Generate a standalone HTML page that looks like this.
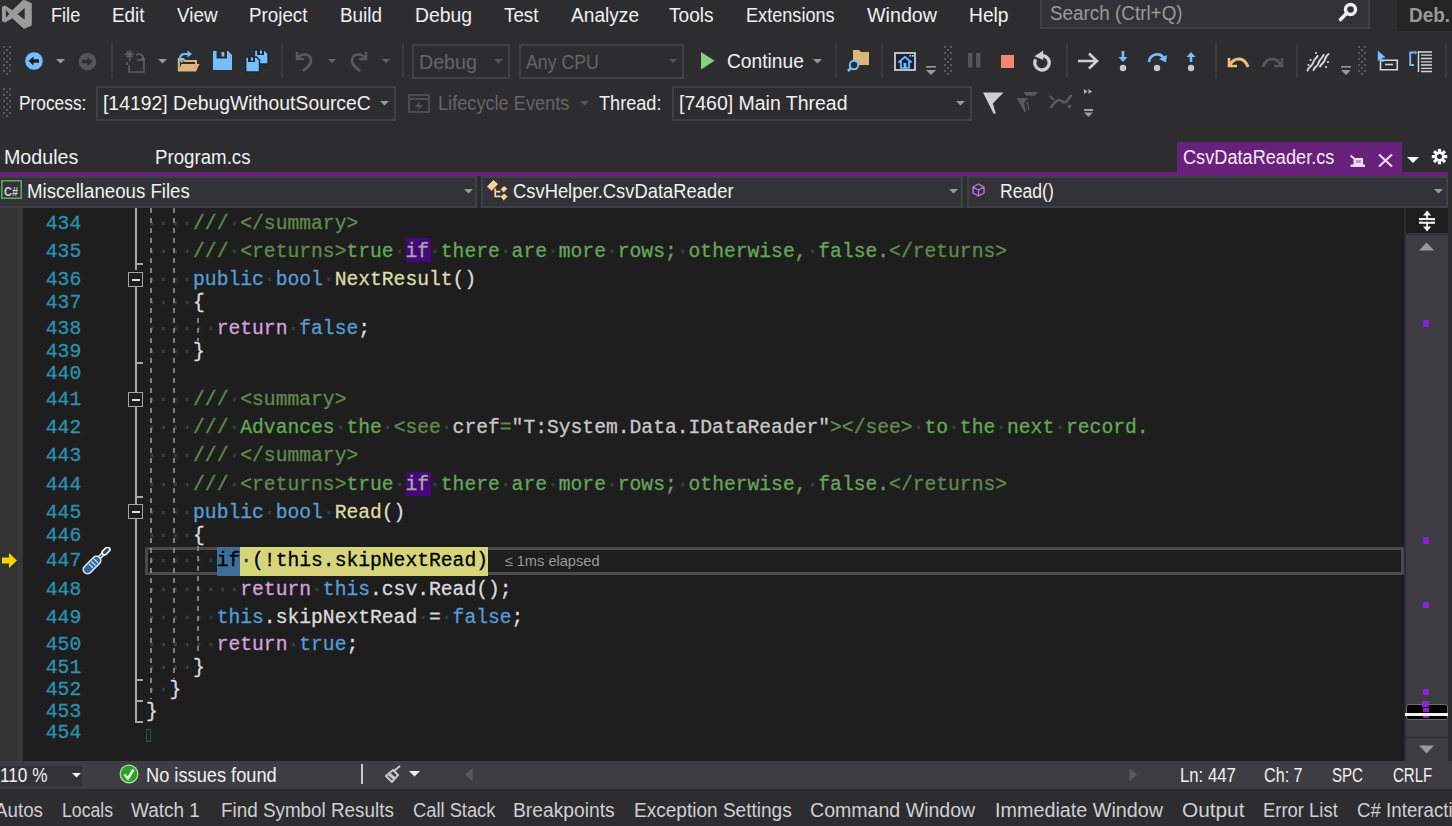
<!DOCTYPE html>
<html><head><meta charset="utf-8"><style>
html,body{margin:0;padding:0;}
body{width:1452px;height:826px;position:relative;overflow:hidden;background:#2d2d30;font-family:"Liberation Sans",sans-serif;}
.t{position:absolute;white-space:nowrap;transform-origin:0 0;}
.r{position:absolute;}
.m{position:absolute;white-space:pre;font-family:"Liberation Mono",monospace;font-size:19.666px;line-height:26px;height:26px;-webkit-text-stroke:0.3px;}
.ln{color:#2b91af;text-align:right;}
</style></head><body>
<svg class="r" style="left:0px;top:0px" width="33" height="30" viewBox="0 0 33 30"><path d="M23.5 -0.5 L31.8 3.2 V25.6 L24 29 L12.3 18.2 L5.2 22.6 L2 21.2 V6.8 L5.2 5.4 L12.3 10.2 Z M24.7 8 L17.6 14.2 L24.7 19.8 Z M5.9 9.8 V17.8 L9.3 14 Z" fill="#9b9b9b" fill-rule="evenodd"/></svg>
<div class="t" style="left:51.00px;top:5.07px;font-size:20px;line-height:20px;color:#f1f1f1;transform:scaleX(0.9068);">File</div>
<div class="t" style="left:112.00px;top:5.07px;font-size:20px;line-height:20px;color:#f1f1f1;transform:scaleX(0.9449);">Edit</div>
<div class="t" style="left:176.50px;top:5.07px;font-size:20px;line-height:20px;color:#f1f1f1;transform:scaleX(0.9419);">View</div>
<div class="t" style="left:248.70px;top:5.07px;font-size:20px;line-height:20px;color:#f1f1f1;transform:scaleX(0.9389);">Project</div>
<div class="t" style="left:340.00px;top:5.07px;font-size:20px;line-height:20px;color:#f1f1f1;transform:scaleX(0.9438);">Build</div>
<div class="t" style="left:415.00px;top:5.07px;font-size:20px;line-height:20px;color:#f1f1f1;transform:scaleX(0.9677);">Debug</div>
<div class="t" style="left:504.00px;top:5.07px;font-size:20px;line-height:20px;color:#f1f1f1;transform:scaleX(0.9401);">Test</div>
<div class="t" style="left:570.50px;top:5.07px;font-size:20px;line-height:20px;color:#f1f1f1;transform:scaleX(0.9565);">Analyze</div>
<div class="t" style="left:669.00px;top:5.07px;font-size:20px;line-height:20px;color:#f1f1f1;transform:scaleX(0.9550);">Tools</div>
<div class="t" style="left:745.70px;top:5.07px;font-size:20px;line-height:20px;color:#f1f1f1;transform:scaleX(0.9059);">Extensions</div>
<div class="t" style="left:866.70px;top:5.07px;font-size:20px;line-height:20px;color:#f1f1f1;transform:scaleX(0.9846);">Window</div>
<div class="t" style="left:969.00px;top:5.07px;font-size:20px;line-height:20px;color:#f1f1f1;transform:scaleX(0.9611);">Help</div>
<div class="r" style="left:1040px;top:-2px;width:330px;height:31px;background:#333337;border:2px solid #3f3f46;box-sizing:border-box;"></div>
<div class="t" style="left:1050.00px;top:3.37px;font-size:20px;line-height:20px;color:#999999;transform:scaleX(0.9431);">Search (Ctrl+Q)</div>
<svg class="r" style="left:1337px;top:1px" width="23" height="23" viewBox="0 0 23 23"><circle cx="13.5" cy="8.5" r="5" fill="none" stroke="#f1f1f1" stroke-width="3.4"/><path d="M10 12 L3.5 18.5" stroke="#f1f1f1" stroke-width="3.6" stroke-linecap="round"/></svg>
<div class="r" style="left:1397px;top:0px;width:55px;height:30.5px;background:#252526;"></div>
<div class="t" style="left:1409.00px;top:5.07px;font-size:20px;line-height:20px;color:#999999;font-weight:bold;transform:scaleX(0.9469);">Deb.</div>
<svg class="r" style="left:2.7px;top:45.5px" width="9" height="30" viewBox="0 0 9 30"><rect x="0" y="0" width="2" height="2" fill="#5a5a5e"/><rect x="6" y="0" width="2" height="2" fill="#5a5a5e"/><rect x="3" y="3" width="2" height="2" fill="#5a5a5e"/><rect x="0" y="6" width="2" height="2" fill="#5a5a5e"/><rect x="6" y="6" width="2" height="2" fill="#5a5a5e"/><rect x="3" y="9" width="2" height="2" fill="#5a5a5e"/><rect x="0" y="12" width="2" height="2" fill="#5a5a5e"/><rect x="6" y="12" width="2" height="2" fill="#5a5a5e"/><rect x="3" y="15" width="2" height="2" fill="#5a5a5e"/><rect x="0" y="18" width="2" height="2" fill="#5a5a5e"/><rect x="6" y="18" width="2" height="2" fill="#5a5a5e"/><rect x="3" y="21" width="2" height="2" fill="#5a5a5e"/><rect x="0" y="24" width="2" height="2" fill="#5a5a5e"/><rect x="6" y="24" width="2" height="2" fill="#5a5a5e"/><rect x="3" y="27" width="2" height="2" fill="#5a5a5e"/></svg>
<svg class="r" style="left:24px;top:51px" width="20" height="20" viewBox="0 0 20 20"><circle cx="10" cy="10" r="9.3" fill="#75beff" stroke="#1b2d45" stroke-width="1"/><path d="M4.5 10 L9.5 5.5 V8.3 H15 V11.7 H9.5 V14.5 Z" fill="#1e1e1e"/></svg>
<svg class="r" style="left:56px;top:59px" width="9" height="4.5" viewBox="0 0 9 4.5"><path d="M0 0 H9 L4.5 4.5 Z" fill="#999999"/></svg>
<svg class="r" style="left:78px;top:52px" width="19" height="19" viewBox="0 0 19 19"><circle cx="9.5" cy="9.5" r="8.8" fill="#555555"/><path d="M14.5 9.5 L9.5 5 V7.8 H4 V11.2 H9.5 V14 Z" fill="#2d2d30"/></svg>
<div class="r" style="left:110.5px;top:44px;width:2px;height:34px;background:#3a3a3e;"></div>
<svg class="r" style="left:125px;top:50px" width="21" height="23" viewBox="0 0 21 23"><path d="M1.5 1.5 L7.5 7.5 M7.5 1.5 L1.5 7.5 M4.5 0 V9 M0 4.5 H9" stroke="#5f5f5f" stroke-width="1.4"/><path d="M2 12 V15 M4 10 H6 M4 15 V22 H19 V10 H12" fill="none" stroke="#5f5f5f" stroke-width="1.6"/><path d="M11 5 C15 3 19 5 18 9" fill="none" stroke="#5f5f5f" stroke-width="1.6"/><path d="M15.5 8 L18 11 L20.5 8 Z" fill="#5f5f5f"/></svg>
<svg class="r" style="left:158px;top:59px" width="9" height="4.5" viewBox="0 0 9 4.5"><path d="M0 0 H9 L4.5 4.5 Z" fill="#999999"/></svg>
<svg class="r" style="left:177px;top:50px" width="23" height="23" viewBox="0 0 23 23"><path d="M1.8 21 V9 H6 L8 11 H19 V14" fill="none" stroke="#dcb67a" stroke-width="2"/><path d="M1 21.5 L4.5 14 H22.5 L19 21.5 Z" fill="#dcb67a"/><path d="M6 12 C1.5 10.5 2 4 8 4 H11" fill="none" stroke="#75beff" stroke-width="2.1"/><path d="M10.5 0.5 L15 4 L10.5 7.5 Z" fill="#75beff"/></svg>
<svg class="r" style="left:213px;top:51px" width="20" height="20" viewBox="0 0 20 20"><path d="M0 0 H15 L19 4 V19 H0 Z" fill="#75beff"/><rect x="3.5" y="0" width="10.5" height="7.5" fill="#2d2d30"/><rect x="8.5" y="1" width="2.8" height="4.5" fill="#75beff"/></svg>
<svg class="r" style="left:245px;top:49px" width="24" height="24" viewBox="0 0 24 24"><path d="M9.5 1 H19.5 L23 4.5 V15 H9.5 Z" fill="#75beff" stroke="#1b2a3a" stroke-width="1.4"/><rect x="12" y="1" width="7" height="5" fill="#1b2a3a"/><rect x="15" y="1.5" width="2" height="3.2" fill="#75beff"/><path d="M0.7 8 H11.5 L14.5 11 V23 H0.7 Z" fill="#75beff" stroke="#1b2a3a" stroke-width="1.4"/><rect x="3" y="8" width="7" height="5" fill="#1b2a3a"/><rect x="6" y="8.5" width="2" height="3.2" fill="#75beff"/></svg>
<div class="r" style="left:280.5px;top:44px;width:2px;height:34px;background:#3a3a3e;"></div>
<svg class="r" style="left:294px;top:50px" width="20" height="22" viewBox="0 0 20 22"><path d="M3 2 V9 H10" fill="none" stroke="#5a5a5a" stroke-width="2.4"/><path d="M3.5 8.5 C7 3 16 3 17 10 C17.5 14 14 17 9 21" fill="none" stroke="#5a5a5a" stroke-width="2.6"/></svg>
<svg class="r" style="left:328px;top:59px" width="8" height="4.0" viewBox="0 0 8 4.0"><path d="M0 0 H8 L4.0 4.0 Z" fill="#666666"/></svg>
<svg class="r" style="left:349px;top:50px" width="20" height="22" viewBox="0 0 20 22"><path d="M17 2 V9 H10" fill="none" stroke="#5a5a5a" stroke-width="2.4"/><path d="M16.5 8.5 C13 3 4 3 3 10 C2.5 14 6 17 11 21" fill="none" stroke="#5a5a5a" stroke-width="2.6"/></svg>
<svg class="r" style="left:382px;top:59px" width="8" height="4.0" viewBox="0 0 8 4.0"><path d="M0 0 H8 L4.0 4.0 Z" fill="#666666"/></svg>
<div class="r" style="left:401.5px;top:44px;width:2px;height:34px;background:#3a3a3e;"></div>
<div class="r" style="left:412px;top:44px;width:98px;height:35px;border:2px solid #3f3f46;box-sizing:border-box;"></div>
<div class="t" style="left:419.00px;top:52.07px;font-size:20px;line-height:20px;color:#656565;transform:scaleX(0.9813);">Debug</div>
<svg class="r" style="left:494px;top:59px" width="9" height="4.5" viewBox="0 0 9 4.5"><path d="M0 0 H9 L4.5 4.5 Z" fill="#555555"/></svg>
<div class="r" style="left:519px;top:44px;width:165px;height:35px;border:2px solid #3f3f46;box-sizing:border-box;"></div>
<div class="t" style="left:526.00px;top:52.07px;font-size:20px;line-height:20px;color:#656565;transform:scaleX(0.8856);">Any CPU</div>
<svg class="r" style="left:669px;top:59px" width="8" height="4.0" viewBox="0 0 8 4.0"><path d="M0 0 H8 L4.0 4.0 Z" fill="#555555"/></svg>
<svg class="r" style="left:701px;top:52px" width="14" height="18" viewBox="0 0 14 18"><path d="M0 0 L13.5 8.75 L0 17.5 Z" fill="#89d185"/></svg>
<div class="t" style="left:726.50px;top:51.07px;font-size:20px;line-height:20px;color:#f1f1f1;transform:scaleX(0.9600);">Continue</div>
<svg class="r" style="left:813px;top:59px" width="9" height="4.5" viewBox="0 0 9 4.5"><path d="M0 0 H9 L4.5 4.5 Z" fill="#999999"/></svg>
<div class="r" style="left:834.5px;top:44px;width:2px;height:34px;background:#3a3a3e;"></div>
<svg class="r" style="left:847px;top:49px" width="23" height="23" viewBox="0 0 23 23"><path d="M6 1 H12 L14 3 H22 V16 H6 Z" fill="#dcb67a"/><circle cx="7" cy="16" r="4.2" fill="#2d2d30" stroke="#75beff" stroke-width="2"/><path d="M4 19 L1 22" stroke="#75beff" stroke-width="2.5"/></svg>
<div class="r" style="left:881.0px;top:44px;width:2px;height:34px;background:#3a3a3e;"></div>
<svg class="r" style="left:894px;top:52px" width="22" height="19" viewBox="0 0 22 19"><rect x="1" y="1" width="20" height="17" fill="#16263a" stroke="#d8d8d8" stroke-width="1.7"/><path d="M4.5 10.5 L11 4.8 L17.5 10.5 M7 9.5 V16 H15 V9.5" fill="none" stroke="#75beff" stroke-width="1.7"/><rect x="9.6" y="11" width="2.8" height="5" fill="#75beff"/><rect x="15.5" y="3" width="1.6" height="1.6" fill="#d8d8d8"/><rect x="18" y="3" width="1.6" height="1.6" fill="#d8d8d8"/></svg>
<svg class="r" style="left:926px;top:66px" width="11" height="10" viewBox="0 0 11 10"><rect x="0" y="0" width="10" height="1.6" fill="#999"/><path d="M0 4 H10 L5 9 Z" fill="#999"/></svg>
<svg class="r" style="left:944px;top:45.5px" width="9" height="30" viewBox="0 0 9 30"><rect x="0" y="0" width="2" height="2" fill="#5a5a5e"/><rect x="6" y="0" width="2" height="2" fill="#5a5a5e"/><rect x="3" y="3" width="2" height="2" fill="#5a5a5e"/><rect x="0" y="6" width="2" height="2" fill="#5a5a5e"/><rect x="6" y="6" width="2" height="2" fill="#5a5a5e"/><rect x="3" y="9" width="2" height="2" fill="#5a5a5e"/><rect x="0" y="12" width="2" height="2" fill="#5a5a5e"/><rect x="6" y="12" width="2" height="2" fill="#5a5a5e"/><rect x="3" y="15" width="2" height="2" fill="#5a5a5e"/><rect x="0" y="18" width="2" height="2" fill="#5a5a5e"/><rect x="6" y="18" width="2" height="2" fill="#5a5a5e"/><rect x="3" y="21" width="2" height="2" fill="#5a5a5e"/><rect x="0" y="24" width="2" height="2" fill="#5a5a5e"/><rect x="6" y="24" width="2" height="2" fill="#5a5a5e"/><rect x="3" y="27" width="2" height="2" fill="#5a5a5e"/></svg>
<svg class="r" style="left:968px;top:53px" width="13" height="15" viewBox="0 0 13 15"><rect x="0" y="0" width="4.5" height="14.5" fill="#555555"/><rect x="8" y="0" width="4.5" height="14.5" fill="#555555"/></svg>
<div class="r" style="left:1001px;top:55px;width:13px;height:13px;background:#f48771;"></div>
<svg class="r" style="left:1031px;top:50px" width="22" height="22" viewBox="0 0 22 22"><path d="M11 5.6 A7.2 7.2 0 1 1 4.76 9.2" fill="none" stroke="#d0d0d0" stroke-width="3.3"/><path d="M3.4 6.2 L12.2 0.4 L12.2 10 Z" fill="#d0d0d0"/></svg>
<div class="r" style="left:1065.5px;top:44px;width:2px;height:34px;background:#3a3a3e;"></div>
<svg class="r" style="left:1077px;top:52px" width="23" height="18" viewBox="0 0 23 18"><path d="M1 9 H20 M12 1.5 L20 9 L12 16.5" fill="none" stroke="#d0d0d0" stroke-width="2.6"/></svg>
<svg class="r" style="left:1116px;top:51px" width="14" height="21" viewBox="0 0 14 21"><path d="M7 0 V9" stroke="#75beff" stroke-width="2.6"/><path d="M2.5 6 L7 11 L11.5 6 Z" fill="#75beff"/><circle cx="7" cy="17" r="3.2" fill="#c8c8c8"/></svg>
<svg class="r" style="left:1147px;top:51px" width="21" height="21" viewBox="0 0 21 21"><path d="M2 11 C3 2 14 1 17 8" fill="none" stroke="#75beff" stroke-width="2.6"/><path d="M12 8 L19 11.5 L20 4 Z" fill="#75beff"/><circle cx="10" cy="17" r="3.2" fill="#c8c8c8"/></svg>
<svg class="r" style="left:1184px;top:51px" width="14" height="21" viewBox="0 0 14 21"><path d="M7 4 V11" stroke="#75beff" stroke-width="2.6"/><path d="M2.5 6 L7 1 L11.5 6 Z" fill="#75beff"/><circle cx="7" cy="17" r="3.2" fill="#c8c8c8"/></svg>
<div class="r" style="left:1214.5px;top:44px;width:2px;height:34px;background:#3a3a3e;"></div>
<svg class="r" style="left:1226px;top:54px" width="24" height="15" viewBox="0 0 24 15"><path d="M3 4 V12 H11" fill="none" stroke="#e8c17f" stroke-width="2.6"/><path d="M3.5 11.5 C8 3 18 2 22 13" fill="none" stroke="#e8c17f" stroke-width="3"/></svg>
<svg class="r" style="left:1261px;top:54px" width="24" height="15" viewBox="0 0 24 15"><path d="M21 4 V12 H13" fill="none" stroke="#555" stroke-width="2.6"/><path d="M20.5 11.5 C16 3 6 2 2 13" fill="none" stroke="#555" stroke-width="3"/></svg>
<div class="r" style="left:1295.5px;top:44px;width:2px;height:34px;background:#3a3a3e;"></div>
<svg class="r" style="left:1306px;top:50px" width="24" height="22" viewBox="0 0 24 22"><g fill="none" stroke="#d8d8d8" stroke-width="2" stroke-linecap="round"><path d="M1.5 20.5 C3 16 6 17 7 13 C8 9 10 9 11.5 6"/><path d="M7.5 20 C9 16 11.5 17 12.5 13 C13.5 9 16 9 17.5 5"/><path d="M14 16.5 C16 13 18 13 19 9.5 C20 6 21 5 22.5 4"/></g><circle cx="4.5" cy="10" r="1.1" fill="#d8d8d8"/><circle cx="2.5" cy="15" r="1.1" fill="#d8d8d8"/><circle cx="20" cy="17" r="1.1" fill="#d8d8d8"/><circle cx="22" cy="12" r="1.1" fill="#d8d8d8"/><circle cx="10" cy="3" r="1.1" fill="#d8d8d8"/></svg>
<svg class="r" style="left:1341px;top:66px" width="10" height="10" viewBox="0 0 10 10"><rect x="0" y="0" width="10" height="1.6" fill="#999"/><path d="M0 4 H10 L5 9 Z" fill="#999"/></svg>
<svg class="r" style="left:1358px;top:45.5px" width="9" height="30" viewBox="0 0 9 30"><rect x="0" y="0" width="2" height="2" fill="#5a5a5e"/><rect x="6" y="0" width="2" height="2" fill="#5a5a5e"/><rect x="3" y="3" width="2" height="2" fill="#5a5a5e"/><rect x="0" y="6" width="2" height="2" fill="#5a5a5e"/><rect x="6" y="6" width="2" height="2" fill="#5a5a5e"/><rect x="3" y="9" width="2" height="2" fill="#5a5a5e"/><rect x="0" y="12" width="2" height="2" fill="#5a5a5e"/><rect x="6" y="12" width="2" height="2" fill="#5a5a5e"/><rect x="3" y="15" width="2" height="2" fill="#5a5a5e"/><rect x="0" y="18" width="2" height="2" fill="#5a5a5e"/><rect x="6" y="18" width="2" height="2" fill="#5a5a5e"/><rect x="3" y="21" width="2" height="2" fill="#5a5a5e"/><rect x="0" y="24" width="2" height="2" fill="#5a5a5e"/><rect x="6" y="24" width="2" height="2" fill="#5a5a5e"/><rect x="3" y="27" width="2" height="2" fill="#5a5a5e"/></svg>
<svg class="r" style="left:1377px;top:50px" width="22" height="22" viewBox="0 0 22 22"><path d="M3.5 19.8 V10.3 H20.3 V19.8 Z" fill="none" stroke="#d8d8d8" stroke-width="1.6"/><path d="M8 14.5 H16" stroke="#d8d8d8" stroke-width="1.6"/><path d="M0.8 0.5 V11.5 L3.3 9 L5.6 12.3 L7.2 11.2 L5 8 L8.6 7.6 Z" fill="#75beff"/></svg>
<svg class="r" style="left:1409px;top:49px" width="24" height="24" viewBox="0 0 24 24"><path d="M5 3.5 H1.2 V16 H5" fill="none" stroke="#75beff" stroke-width="1.8"/><path d="M5.5 5.5 L8.5 3.5 L5.5 1.5 Z" fill="#75beff"/><path d="M9.5 2 V23" stroke="#d8d8d8" stroke-width="1.5"/><path d="M9.5 3 H23 M12 6.2 H23 M12 9.5 H23 M12 12.8 H23 M12 16 H23 M12 19.3 H23 M12 22.5 H23" stroke="#d8d8d8" stroke-width="1.3"/></svg>
<div class="r" style="left:1444.5px;top:44px;width:2px;height:34px;background:#3a3a3e;"></div>
<svg class="r" style="left:2.7px;top:88px" width="9" height="30" viewBox="0 0 9 30"><rect x="0" y="0" width="2" height="2" fill="#5a5a5e"/><rect x="6" y="0" width="2" height="2" fill="#5a5a5e"/><rect x="3" y="3" width="2" height="2" fill="#5a5a5e"/><rect x="0" y="6" width="2" height="2" fill="#5a5a5e"/><rect x="6" y="6" width="2" height="2" fill="#5a5a5e"/><rect x="3" y="9" width="2" height="2" fill="#5a5a5e"/><rect x="0" y="12" width="2" height="2" fill="#5a5a5e"/><rect x="6" y="12" width="2" height="2" fill="#5a5a5e"/><rect x="3" y="15" width="2" height="2" fill="#5a5a5e"/><rect x="0" y="18" width="2" height="2" fill="#5a5a5e"/><rect x="6" y="18" width="2" height="2" fill="#5a5a5e"/><rect x="3" y="21" width="2" height="2" fill="#5a5a5e"/><rect x="0" y="24" width="2" height="2" fill="#5a5a5e"/><rect x="6" y="24" width="2" height="2" fill="#5a5a5e"/><rect x="3" y="27" width="2" height="2" fill="#5a5a5e"/></svg>
<div class="t" style="left:18.80px;top:93.47px;font-size:20px;line-height:20px;color:#f1f1f1;transform:scaleX(0.8663);">Process:</div>
<div class="r" style="left:96px;top:86px;width:300px;height:35px;border:2px solid #3f3f46;box-sizing:border-box;"></div>
<div class="t" style="left:103.30px;top:93.47px;font-size:20px;line-height:20px;color:#f1f1f1;transform:scaleX(0.9671);">[14192] DebugWithoutSourceC</div>
<svg class="r" style="left:380px;top:101px" width="9" height="4.5" viewBox="0 0 9 4.5"><path d="M0 0 H9 L4.5 4.5 Z" fill="#999999"/></svg>
<svg class="r" style="left:408px;top:94px" width="22" height="19" viewBox="0 0 22 19"><rect x="1" y="1" width="20" height="17" fill="none" stroke="#555" stroke-width="1.6"/><path d="M1 5 H21" stroke="#555" stroke-width="1.6"/><path d="M12 7 L7 13 H11 L9 17 L15 11 H11 Z" fill="#555"/></svg>
<div class="t" style="left:438.00px;top:93.47px;font-size:20px;line-height:20px;color:#656565;transform:scaleX(0.9087);">Lifecycle Events</div>
<svg class="r" style="left:580px;top:101px" width="9" height="4.5" viewBox="0 0 9 4.5"><path d="M0 0 H9 L4.5 4.5 Z" fill="#555555"/></svg>
<div class="t" style="left:599.20px;top:93.47px;font-size:20px;line-height:20px;color:#f1f1f1;transform:scaleX(0.9057);">Thread:</div>
<div class="r" style="left:672px;top:86px;width:300px;height:35px;border:2px solid #3f3f46;box-sizing:border-box;"></div>
<div class="t" style="left:678.80px;top:93.47px;font-size:20px;line-height:20px;color:#f1f1f1;transform:scaleX(0.9734);">[7460] Main Thread</div>
<svg class="r" style="left:955.5px;top:101px" width="9" height="4.5" viewBox="0 0 9 4.5"><path d="M0 0 H9 L4.5 4.5 Z" fill="#999999"/></svg>
<svg class="r" style="left:982px;top:92px" width="23" height="23" viewBox="0 0 23 23"><path d="M1 0.5 L21.5 0.5 L10.8 11.5 L13.8 21.5 L11.6 21.8 Z" fill="#d0d0d0"/></svg>
<svg class="r" style="left:1016px;top:91px" width="24" height="23" viewBox="0 0 24 23"><path d="M7.5 1 H22 L18.5 4.8 H10 Z" fill="#5a5a5a"/><path d="M0.5 7 H12.5 L8 12 L10 20.5 L8.5 21 Z" fill="#5a5a5a"/><path d="M11 11 L13 19" stroke="#5a5a5a" stroke-width="1.2"/></svg>
<svg class="r" style="left:1049px;top:94px" width="24" height="16" viewBox="0 0 24 16"><path d="M2 13 C5 10 7 6 10 6 C13 6 14 10 17 8 C19 6.5 20 4 22 2" fill="none" stroke="#5a5a5a" stroke-width="2.6" stroke-linecap="round"/><path d="M1 2 L5 6" stroke="#5a5a5a" stroke-width="2.2"/><circle cx="20.5" cy="12.5" r="1.8" fill="#5a5a5a"/></svg>
<svg class="r" style="left:1083px;top:88px" width="11" height="31" viewBox="0 0 11 31"><path d="M1 1 L4.5 3.5 L1 6 Z M5.5 1 L9 3.5 L5.5 6 Z" fill="#b0b0b0"/><rect x="1" y="21" width="9" height="2" fill="#a0a0a0"/><path d="M1 24.5 H10 L5.5 29 Z" fill="#a0a0a0"/></svg>
<div class="t" style="left:3.70px;top:146.57px;font-size:20px;line-height:20px;color:#f1f1f1;transform:scaleX(0.9828);">Modules</div>
<div class="t" style="left:155.40px;top:146.57px;font-size:20px;line-height:20px;color:#f1f1f1;transform:scaleX(0.9345);">Program.cs</div>
<div class="r" style="left:1177px;top:142px;width:225px;height:32px;background:#68217a;"></div>
<div class="t" style="left:1183.30px;top:146.57px;font-size:20px;line-height:20px;color:#f5eaf7;transform:scaleX(0.9082);">CsvDataReader.cs</div>
<svg class="r" style="left:1349px;top:154px" width="17" height="14" viewBox="0 0 17 14"><path d="M1.5 1.5 L5 4.5" stroke="#f0dcf2" stroke-width="2"/><rect x="4.5" y="4" width="9.5" height="7" fill="#f0dcf2"/><rect x="1.5" y="10.5" width="14.5" height="2.5" fill="#f0dcf2"/><rect x="7" y="6" width="5" height="3" fill="#8a5a9a" opacity="0.5"/></svg>
<svg class="r" style="left:1378px;top:154px" width="15" height="13" viewBox="0 0 15 13"><path d="M1 0.5 L14 12.5 M14 0.5 L1 12.5" stroke="#f0dcf2" stroke-width="2.1"/></svg>
<svg class="r" style="left:1407px;top:157px" width="12" height="6.0" viewBox="0 0 12 6.0"><path d="M0 0 H12 L6.0 6.0 Z" fill="#f8f8f8"/></svg>
<svg class="r" style="left:1431px;top:148px" width="17" height="17" viewBox="0 0 17 17"><g transform="translate(8.5 8.6)"><rect x="-1.6" y="-7.7" width="3.2" height="4" fill="#f8f8f8" transform="rotate(0)"/><rect x="-1.6" y="-7.7" width="3.2" height="4" fill="#f8f8f8" transform="rotate(45)"/><rect x="-1.6" y="-7.7" width="3.2" height="4" fill="#f8f8f8" transform="rotate(90)"/><rect x="-1.6" y="-7.7" width="3.2" height="4" fill="#f8f8f8" transform="rotate(135)"/><rect x="-1.6" y="-7.7" width="3.2" height="4" fill="#f8f8f8" transform="rotate(180)"/><rect x="-1.6" y="-7.7" width="3.2" height="4" fill="#f8f8f8" transform="rotate(225)"/><rect x="-1.6" y="-7.7" width="3.2" height="4" fill="#f8f8f8" transform="rotate(270)"/><rect x="-1.6" y="-7.7" width="3.2" height="4" fill="#f8f8f8" transform="rotate(315)"/><circle r="5" fill="#f8f8f8"/><circle r="2.5" fill="#2d2d30"/></g></svg>
<div class="r" style="left:0px;top:171.5px;width:1448px;height:4.8px;background:#68217a;"></div>
<div class="r" style="left:-2px;top:176px;width:479px;height:31.5px;background:#333337;border:2px solid #3f3f46;box-sizing:border-box;"></div>
<div class="r" style="left:481px;top:176px;width:482px;height:31.5px;background:#333337;border:2px solid #3f3f46;box-sizing:border-box;"></div>
<div class="r" style="left:966.5px;top:176px;width:481px;height:31.5px;background:#333337;border:2px solid #3f3f46;box-sizing:border-box;"></div>
<svg class="r" style="left:1px;top:180px" width="21" height="19" viewBox="0 0 21 19"><rect x="0.8" y="0.8" width="19.4" height="17.4" fill="none" stroke="#5ea65a" stroke-width="1.6"/></svg>
<div class="t" style="left:4.00px;top:185.84px;font-size:12px;line-height:12px;color:#d0d0d0;font-weight:bold;transform:scaleX(0.9115);">C#</div>
<div class="t" style="left:26.90px;top:181.07px;font-size:20px;line-height:20px;color:#f1f1f1;transform:scaleX(0.9330);">Miscellaneous Files</div>
<svg class="r" style="left:463.5px;top:189px" width="9" height="4.5" viewBox="0 0 9 4.5"><path d="M0 0 H9 L4.5 4.5 Z" fill="#999999"/></svg>
<svg class="r" style="left:486px;top:179px" width="23" height="23" viewBox="0 0 23 23"><g fill="#f4d29a" stroke="#2a2a2a" stroke-width="0.8"><path d="M0.6 7.5 L7.3 0.5 L12.6 5 L5.6 12.2 Z"/><path d="M14.2 10.2 L18.1 6.6 L21.8 9.6 L17.6 14 Z"/><path d="M14.2 17.6 L18.1 14.2 L22 17.6 L17.6 21.9 Z"/></g><path d="M9.2 9.5 V17.3 H14.5 M9.2 12.6 H14.5" fill="none" stroke="#f4d29a" stroke-width="1.7"/></svg>
<div class="t" style="left:512.90px;top:181.07px;font-size:20px;line-height:20px;color:#f1f1f1;transform:scaleX(0.9184);">CsvHelper.CsvDataReader</div>
<svg class="r" style="left:949px;top:189px" width="9" height="4.5" viewBox="0 0 9 4.5"><path d="M0 0 H9 L4.5 4.5 Z" fill="#999999"/></svg>
<svg class="r" style="left:972px;top:183px" width="13" height="14" viewBox="0 0 13 14"><path d="M6.5 1 L12 4 V10 L6.5 13 L1 10 V4 Z M1 4 L6.5 7 L12 4 M6.5 7 V13" fill="#3c2a52" stroke="#b180d7" stroke-width="1.3" stroke-linejoin="round"/></svg>
<div class="t" style="left:999.50px;top:181.07px;font-size:20px;line-height:20px;color:#f1f1f1;transform:scaleX(0.8805);">Read()</div>
<svg class="r" style="left:1434px;top:189px" width="9" height="4.5" viewBox="0 0 9 4.5"><path d="M0 0 H9 L4.5 4.5 Z" fill="#999999"/></svg>
<div class="r" style="left:0px;top:208px;width:23px;height:553px;background:#333333;"></div>
<div class="r" style="left:16.5px;top:208px;width:6.5px;height:553px;background:#373737;"></div>
<div class="r" style="left:23px;top:208px;width:1381px;height:553px;background:#1e1e1e;"></div>
<div class="r" style="left:1404px;top:208px;width:44px;height:553px;background:#3e3e42;"></div>
<div class="r" style="left:1404px;top:208px;width:2px;height:553px;background:#2d2d30;"></div>
<div class="r" style="left:1448px;top:208px;width:4px;height:553px;background:#2d2d30;"></div>
<div class="r" style="left:1406px;top:208px;width:42px;height:25px;background:#1e1e1e;"></div>
<div class="r" style="left:1406px;top:233px;width:42px;height:1.5px;background:#333337;"></div>
<svg class="r" style="left:1418px;top:210px" width="18" height="22" viewBox="0 0 18 22"><rect x="8.2" y="2" width="1.8" height="18" fill="#f1f1f1"/><path d="M5 5.5 L9.1 0.5 L13.2 5.5 Z M5 16.5 L9.1 21.5 L13.2 16.5 Z" fill="#f1f1f1"/><rect x="1" y="8" width="16" height="2.2" fill="#f1f1f1"/><rect x="1" y="11.6" width="16" height="2.2" fill="#f1f1f1"/><rect x="5" y="10.2" width="8" height="1.4" fill="#1e1e1e"/></svg>
<svg class="r" style="left:1419px;top:242px" width="15" height="9" viewBox="0 0 15 9"><path d="M0 8.5 L7.5 0.5 L15 8.5 Z" fill="#999999"/></svg>
<svg class="r" style="left:1419px;top:745px" width="15" height="9" viewBox="0 0 15 9"><path d="M0 0.5 L7.5 8.5 L15 0.5 Z" fill="#999999"/></svg>
<div class="r" style="left:1406px;top:737px;width:42px;height:1px;background:#2d2d30;"></div>
<div class="r" style="left:1422.5px;top:320.2px;width:6.5px;height:6.5px;background:#8a22d8;"></div>
<div class="r" style="left:1422.5px;top:537.2px;width:6.5px;height:6.5px;background:#8a22d8;"></div>
<div class="r" style="left:1422.5px;top:601.9px;width:6.5px;height:6.5px;background:#8a22d8;"></div>
<div class="r" style="left:1422.5px;top:688.6px;width:6.5px;height:6.5px;background:#8a22d8;"></div>
<div class="r" style="left:1405.5px;top:703.5px;width:42px;height:16px;background:#000000;border:1px solid #6e6e6e;box-sizing:border-box;border-radius:3px;"></div>
<div class="r" style="left:1405px;top:712.5px;width:43px;height:3.5px;background:#f1f1f1;"></div>
<div class="r" style="left:1422.3px;top:701.2px;width:7px;height:5.4px;background:#8a22d8;"></div>
<div class="r" style="left:1422.5px;top:708.4px;width:6.5px;height:3.8px;background:#8a22d8;"></div>
<div class="r" style="left:1422.5px;top:715.8px;width:6.5px;height:2.2px;background:#8a22d8;"></div>
<div class="r" style="left:144.5px;top:547.3px;width:1259.2px;height:27.8px;border:3px solid #4a4a4a;box-sizing:border-box;"></div>
<div class="r" style="left:406.1px;top:238.3px;width:24.6px;height:24px;background:#45087a;"></div>
<div class="r" style="left:406.1px;top:471.5px;width:24.6px;height:24px;background:#45087a;"></div>
<div class="r" style="left:216.6px;top:547px;width:271.2px;height:29px;background:#d6d57b;"></div>
<div class="r" style="left:216.6px;top:547px;width:23.6px;height:29px;background:#3d6f9b;"></div>
<div class="m ln" style="left:45.80px;top:210.85px;width:35.37px">434</div>
<div class="m" style="left:145.90px;top:210.85px"><span style="color:#2f4143">····</span><span style="color:#608b4e">///</span><span style="color:#2f4143">·</span><span style="color:#608b4e">&lt;/summary&gt;</span></div>
<div class="m ln" style="left:45.80px;top:238.65px;width:35.37px">435</div>
<div class="m" style="left:145.90px;top:238.65px"><span style="color:#2f4143">····</span><span style="color:#608b4e">///</span><span style="color:#2f4143">·</span><span style="color:#608b4e">&lt;returns&gt;</span><span style="color:#66a65a">true</span><span style="color:#2f4143">·</span><span style="color:#a9a9a0">if</span><span style="color:#2f4143">·</span><span style="color:#66a65a">there</span><span style="color:#2f4143">·</span><span style="color:#66a65a">are</span><span style="color:#2f4143">·</span><span style="color:#66a65a">more</span><span style="color:#2f4143">·</span><span style="color:#66a65a">rows;</span><span style="color:#2f4143">·</span><span style="color:#66a65a">otherwise,</span><span style="color:#2f4143">·</span><span style="color:#66a65a">false.</span><span style="color:#608b4e">&lt;/returns&gt;</span></div>
<div class="m ln" style="left:45.80px;top:266.75px;width:35.37px">436</div>
<div class="m" style="left:145.90px;top:266.75px"><span style="color:#2f4143">····</span><span style="color:#569cd6">public</span><span style="color:#2f4143">·</span><span style="color:#569cd6">bool</span><span style="color:#2f4143">·</span><span style="color:#dcdcaa">NextResult</span><span style="color:#dcdcdc">()</span></div>
<div class="m ln" style="left:45.80px;top:289.85px;width:35.37px">437</div>
<div class="m" style="left:145.90px;top:289.85px"><span style="color:#2f4143">····</span><span style="color:#dcdcdc">{</span></div>
<div class="m ln" style="left:45.80px;top:315.85px;width:35.37px">438</div>
<div class="m" style="left:145.90px;top:315.85px"><span style="color:#2f4143">····</span><span style="color:#2f4143">·</span><span style="color:#2f4143">·</span><span style="color:#d8a0df">return</span><span style="color:#2f4143">·</span><span style="color:#569cd6">false</span><span style="color:#dcdcdc">;</span></div>
<div class="m ln" style="left:45.80px;top:339.45px;width:35.37px">439</div>
<div class="m" style="left:145.90px;top:339.45px"><span style="color:#2f4143">····</span><span style="color:#dcdcdc">}</span></div>
<div class="m ln" style="left:45.80px;top:360.65px;width:35.37px">440</div>
<div class="m ln" style="left:45.80px;top:386.85px;width:35.37px">441</div>
<div class="m" style="left:145.90px;top:386.85px"><span style="color:#2f4143">····</span><span style="color:#608b4e">///</span><span style="color:#2f4143">·</span><span style="color:#608b4e">&lt;summary&gt;</span></div>
<div class="m ln" style="left:45.80px;top:414.75px;width:35.37px">442</div>
<div class="m" style="left:145.90px;top:414.75px"><span style="color:#2f4143">····</span><span style="color:#608b4e">///</span><span style="color:#2f4143">·</span><span style="color:#66a65a">Advances</span><span style="color:#2f4143">·</span><span style="color:#66a65a">the</span><span style="color:#2f4143">·</span><span style="color:#608b4e">&lt;see</span><span style="color:#2f4143">·</span><span style="color:#c8c8c8">cref</span><span style="color:#608b4e">=</span><span style="color:#c8c8c8">"T:System.Data.IDataReader"</span><span style="color:#608b4e">&gt;&lt;/see&gt;</span><span style="color:#2f4143">·</span><span style="color:#66a65a">to</span><span style="color:#2f4143">·</span><span style="color:#66a65a">the</span><span style="color:#2f4143">·</span><span style="color:#66a65a">next</span><span style="color:#2f4143">·</span><span style="color:#66a65a">record.</span></div>
<div class="m ln" style="left:45.80px;top:442.55px;width:35.37px">443</div>
<div class="m" style="left:145.90px;top:442.55px"><span style="color:#2f4143">····</span><span style="color:#608b4e">///</span><span style="color:#2f4143">·</span><span style="color:#608b4e">&lt;/summary&gt;</span></div>
<div class="m ln" style="left:45.80px;top:471.85px;width:35.37px">444</div>
<div class="m" style="left:145.90px;top:471.85px"><span style="color:#2f4143">····</span><span style="color:#608b4e">///</span><span style="color:#2f4143">·</span><span style="color:#608b4e">&lt;returns&gt;</span><span style="color:#66a65a">true</span><span style="color:#2f4143">·</span><span style="color:#a9a9a0">if</span><span style="color:#2f4143">·</span><span style="color:#66a65a">there</span><span style="color:#2f4143">·</span><span style="color:#66a65a">are</span><span style="color:#2f4143">·</span><span style="color:#66a65a">more</span><span style="color:#2f4143">·</span><span style="color:#66a65a">rows;</span><span style="color:#2f4143">·</span><span style="color:#66a65a">otherwise,</span><span style="color:#2f4143">·</span><span style="color:#66a65a">false.</span><span style="color:#608b4e">&lt;/returns&gt;</span></div>
<div class="m ln" style="left:45.80px;top:499.65px;width:35.37px">445</div>
<div class="m" style="left:145.90px;top:499.65px"><span style="color:#2f4143">····</span><span style="color:#569cd6">public</span><span style="color:#2f4143">·</span><span style="color:#569cd6">bool</span><span style="color:#2f4143">·</span><span style="color:#dcdcaa">Read</span><span style="color:#dcdcdc">()</span></div>
<div class="m ln" style="left:45.80px;top:522.65px;width:35.37px">446</div>
<div class="m" style="left:145.90px;top:522.65px"><span style="color:#2f4143">····</span><span style="color:#dcdcdc">{</span></div>
<div class="m ln" style="left:45.80px;top:548.35px;width:35.37px">447</div>
<div class="m" style="left:145.90px;top:548.35px"><span style="color:#2f4143">····</span><span style="color:#2f4143">·</span><span style="color:#2f4143">·</span><span style="color:#000">if</span><span style="color:#3a3a20">·</span><span style="color:#000">(!this.skipNextRead)</span></div>
<div class="m ln" style="left:45.80px;top:576.75px;width:35.37px">448</div>
<div class="m" style="left:145.90px;top:576.75px"><span style="color:#2f4143">····</span><span style="color:#2f4143">·</span><span style="color:#2f4143">·</span><span style="color:#2f4143">·</span><span style="color:#2f4143">·</span><span style="color:#d8a0df">return</span><span style="color:#2f4143">·</span><span style="color:#569cd6">this</span><span style="color:#dcdcdc">.csv.Read();</span></div>
<div class="m ln" style="left:45.80px;top:604.55px;width:35.37px">449</div>
<div class="m" style="left:145.90px;top:604.55px"><span style="color:#2f4143">····</span><span style="color:#2f4143">·</span><span style="color:#2f4143">·</span><span style="color:#569cd6">this</span><span style="color:#dcdcdc">.skipNextRead</span><span style="color:#2f4143">·</span><span style="color:#dcdcdc">=</span><span style="color:#2f4143">·</span><span style="color:#569cd6">false</span><span style="color:#dcdcdc">;</span></div>
<div class="m ln" style="left:45.80px;top:632.35px;width:35.37px">450</div>
<div class="m" style="left:145.90px;top:632.35px"><span style="color:#2f4143">····</span><span style="color:#2f4143">·</span><span style="color:#2f4143">·</span><span style="color:#d8a0df">return</span><span style="color:#2f4143">·</span><span style="color:#569cd6">true</span><span style="color:#dcdcdc">;</span></div>
<div class="m ln" style="left:45.80px;top:655.45px;width:35.37px">451</div>
<div class="m" style="left:145.90px;top:655.45px"><span style="color:#2f4143">····</span><span style="color:#dcdcdc">}</span></div>
<div class="m ln" style="left:45.80px;top:677.45px;width:35.37px">452</div>
<div class="m" style="left:145.90px;top:677.45px"><span style="color:#2f4143">··</span><span style="color:#dcdcdc">}</span></div>
<div class="m ln" style="left:45.80px;top:698.65px;width:35.37px">453</div>
<div class="m" style="left:145.90px;top:698.65px"><span style="color:#dcdcdc">}</span></div>
<div class="m ln" style="left:45.80px;top:720.45px;width:35.37px">454</div>
<div class="t" style="left:504.70px;top:553.64px;font-size:14.6px;line-height:14.6px;color:#999999;">≤ 1ms elapsed</div>
<div class="r" style="left:145.5px;top:729px;width:5px;height:13px;border:1px solid #2f5252;box-sizing:border-box;"></div>
<div class="r" style="left:149.5px;top:208px;width:2px;height:491px;background:repeating-linear-gradient(to bottom,#8a8a8a 0 5px,transparent 5px 10px);opacity:0.9"></div>
<div class="r" style="left:172.8px;top:208px;width:2px;height:471px;background:repeating-linear-gradient(to bottom,#8a8a8a 0 5px,transparent 5px 10px);opacity:0.9"></div>
<div class="r" style="left:196.8px;top:318px;width:2px;height:23px;background:repeating-linear-gradient(to bottom,#8a8a8a 0 5px,transparent 5px 10px);opacity:0.9"></div>
<div class="r" style="left:196.8px;top:546px;width:2px;height:109px;background:repeating-linear-gradient(to bottom,#8a8a8a 0 5px,transparent 5px 10px);opacity:0.9"></div>
<div class="r" style="left:135px;top:208px;width:2px;height:62px;background:#a5a5a5;"></div>
<div class="r" style="left:135px;top:262.5px;width:8px;height:2px;background:#a5a5a5;"></div>
<div class="r" style="left:128px;top:272px;width:15px;height:15px;background:#1e1e1e;border:1.6px solid #a5a5a5;box-sizing:border-box;"></div>
<div class="r" style="left:131.5px;top:278.5px;width:8px;height:2px;background:#e0e0e0;"></div>
<div class="r" style="left:135px;top:287px;width:2px;height:105px;background:#a5a5a5;"></div>
<div class="r" style="left:135px;top:361.5px;width:8px;height:2px;background:#a5a5a5;"></div>
<div class="r" style="left:128px;top:392px;width:15px;height:15px;background:#1e1e1e;border:1.6px solid #a5a5a5;box-sizing:border-box;"></div>
<div class="r" style="left:131.5px;top:398.5px;width:8px;height:2px;background:#e0e0e0;"></div>
<div class="r" style="left:135px;top:407px;width:2px;height:97px;background:#a5a5a5;"></div>
<div class="r" style="left:135px;top:496px;width:8px;height:2px;background:#a5a5a5;"></div>
<div class="r" style="left:128px;top:504px;width:15px;height:15px;background:#1e1e1e;border:1.6px solid #a5a5a5;box-sizing:border-box;"></div>
<div class="r" style="left:131.5px;top:510.5px;width:8px;height:2px;background:#e0e0e0;"></div>
<div class="r" style="left:135px;top:519px;width:2px;height:204px;background:#a5a5a5;"></div>
<div class="r" style="left:135px;top:678.5px;width:8px;height:2px;background:#a5a5a5;"></div>
<div class="r" style="left:135px;top:700px;width:8px;height:2px;background:#a5a5a5;"></div>
<div class="r" style="left:135px;top:721px;width:8px;height:2px;background:#a5a5a5;"></div>
<svg class="r" style="left:2px;top:553px" width="16" height="15" viewBox="0 0 16 15"><path d="M0 4.5 H7 V0 L15 7.5 L7 15 V10.5 H0 Z" fill="#f5d50a"/></svg>
<svg class="r" style="left:82px;top:547px" width="29" height="28" viewBox="0 0 29 28"><path d="M14 14 L24.5 3.5" stroke="#e8eef5" stroke-width="4.2" stroke-linecap="round"/><path d="M15 13 L24 4" stroke="#3a3f46" stroke-width="1.2"/><path d="M22.5 5.5 L25.5 2.5" stroke="#e8eef5" stroke-width="6.5" stroke-linecap="round"/><path d="M22.5 5.5 L25.5 2.5" stroke="#3a3f46" stroke-width="3" stroke-linecap="round"/><path d="M5.5 22.5 L14.5 13.5" stroke="#e8eef5" stroke-width="10" stroke-linecap="round"/><path d="M5.5 22.5 L14.5 13.5" stroke="#2f68a8" stroke-width="7" stroke-linecap="round"/><path d="M7 17 L11 21 M9.5 14.5 L13.5 18.5 M12 12 L16 16" stroke="#cfe0f5" stroke-width="1.1"/></svg>
<div class="r" style="left:0px;top:761px;width:1452px;height:28px;background:#3e3e42;"></div>
<div class="r" style="left:0px;top:765.5px;width:82px;height:20.5px;background:#333337;"></div>
<div class="t" style="left:0.00px;top:764.77px;font-size:20px;line-height:20px;color:#f1f1f1;transform:scaleX(0.8605);">110 %</div>
<svg class="r" style="left:72px;top:773px" width="9" height="4.5" viewBox="0 0 9 4.5"><path d="M0 0 H9 L4.5 4.5 Z" fill="#f1f1f1"/></svg>
<svg class="r" style="left:119px;top:764px" width="20" height="20" viewBox="0 0 20 20"><circle cx="10" cy="10" r="9.5" fill="#a8e0a0"/><circle cx="10" cy="10" r="8.2" fill="#2c9f2c"/><path d="M5.5 10.5 L9 14.5 L14.5 5.5" fill="none" stroke="#e8f8e0" stroke-width="2.6"/></svg>
<div class="t" style="left:145.70px;top:764.77px;font-size:20px;line-height:20px;color:#f1f1f1;transform:scaleX(0.9114);">No issues found</div>
<div class="r" style="left:361px;top:764px;width:2px;height:20px;background:#c8c8c8;"></div>
<svg class="r" style="left:385px;top:765px" width="17" height="18" viewBox="0 0 17 18"><path d="M15 1 L9 6" stroke="#c8c8c8" stroke-width="2"/><path d="M8 5 L13 10 L7 17 L1 11 Z" fill="none" stroke="#c8c8c8" stroke-width="2"/><path d="M4 9 L10 14" stroke="#c8c8c8" stroke-width="3"/></svg>
<svg class="r" style="left:409px;top:771px" width="11" height="5.5" viewBox="0 0 11 5.5"><path d="M0 0 H11 L5.5 5.5 Z" fill="#f1f1f1"/></svg>
<svg class="r" style="left:465px;top:768px" width="8" height="14" viewBox="0 0 8 14"><path d="M7.5 0 V13.5 L0 6.75 Z" fill="#5a5a5e"/></svg>
<svg class="r" style="left:1128.5px;top:768px" width="8" height="14" viewBox="0 0 8 14"><path d="M0.5 0 V13.5 L8 6.75 Z" fill="#5a5a5e"/></svg>
<div class="t" style="left:1180.00px;top:764.77px;font-size:20px;line-height:20px;color:#f1f1f1;transform:scaleX(0.8366);">Ln: 447</div>
<div class="t" style="left:1264.40px;top:764.77px;font-size:20px;line-height:20px;color:#f1f1f1;transform:scaleX(0.8075);">Ch: 7</div>
<div class="t" style="left:1332.00px;top:764.77px;font-size:20px;line-height:20px;color:#f1f1f1;transform:scaleX(0.7543);">SPC</div>
<div class="t" style="left:1393.30px;top:764.77px;font-size:20px;line-height:20px;color:#f1f1f1;transform:scaleX(0.7529);">CRLF</div>
<div class="t" style="left:-5.50px;top:799.57px;font-size:20px;line-height:20px;color:#d0d0d0;transform:scaleX(0.9374);">Autos</div>
<div class="t" style="left:61.60px;top:799.57px;font-size:20px;line-height:20px;color:#d0d0d0;transform:scaleX(0.8824);">Locals</div>
<div class="t" style="left:131.20px;top:799.57px;font-size:20px;line-height:20px;color:#d0d0d0;transform:scaleX(0.9477);">Watch 1</div>
<div class="t" style="left:220.70px;top:799.57px;font-size:20px;line-height:20px;color:#d0d0d0;transform:scaleX(0.9422);">Find Symbol Results</div>
<div class="t" style="left:412.50px;top:799.57px;font-size:20px;line-height:20px;color:#d0d0d0;transform:scaleX(0.9156);">Call Stack</div>
<div class="t" style="left:513.40px;top:799.57px;font-size:20px;line-height:20px;color:#d0d0d0;transform:scaleX(0.9621);">Breakpoints</div>
<div class="t" style="left:633.80px;top:799.57px;font-size:20px;line-height:20px;color:#d0d0d0;transform:scaleX(0.9517);">Exception Settings</div>
<div class="t" style="left:810.40px;top:799.57px;font-size:20px;line-height:20px;color:#d0d0d0;transform:scaleX(0.9781);">Command Window</div>
<div class="t" style="left:994.60px;top:799.57px;font-size:20px;line-height:20px;color:#d0d0d0;transform:scaleX(0.9882);">Immediate Window</div>
<div class="t" style="left:1181.60px;top:799.57px;font-size:20px;line-height:20px;color:#d0d0d0;transform:scaleX(1.0400);">Output</div>
<div class="t" style="left:1262.80px;top:799.57px;font-size:20px;line-height:20px;color:#d0d0d0;transform:scaleX(0.9223);">Error List</div>
<div class="t" style="left:1356.50px;top:799.57px;font-size:20px;line-height:20px;color:#d0d0d0;transform:scaleX(0.9350);">C# Interactive</div>
</body></html>
